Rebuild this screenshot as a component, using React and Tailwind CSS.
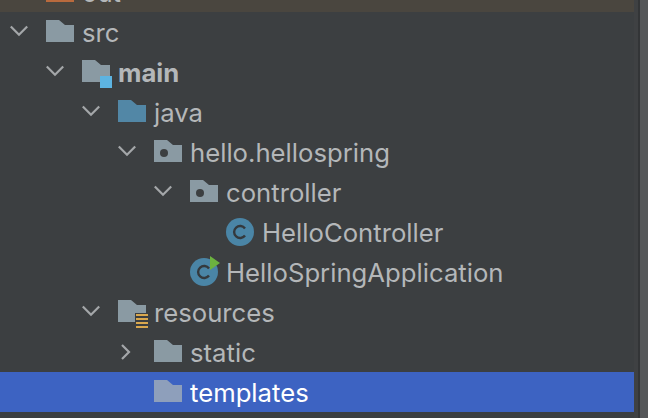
import React from 'react';

const FOLDER = 'M0 0H13L19 5H28V22H0Z';

const Chevron = ({ open }) => (
  <svg width="20" height="20" viewBox="0 0 20 20" fill="none" stroke="#a4a7a9" strokeWidth="2.2">
    {open ? <path d="M1.8 4.5L10 12.7L18.2 4.5" /> : <path d="M5 3L12 10L5 17" />}
  </svg>
);

const Folder = ({ kind }) => {
  const fill = kind === 'java' ? '#5287a6' : kind === 'selected' ? '#8e9fbb' : kind === 'out' ? '#b96a3d' : '#8a9aa3';
  return (
    <svg width="34" height="28" viewBox="0 0 34 28" className="overflow-visible">
      <path d={FOLDER} transform="translate(0 2)" fill={fill} />
      {kind === 'package' && <circle cx="10" cy="15" r="4" fill="#3c3f41" />}
      {kind === 'source' && <rect x="18" y="18" width="12" height="12" fill="#5db4e2" />}
      {kind === 'resource' && (
        <g>
          <rect x="17" y="15" width="14" height="15" fill="#3c3f41" />
          <path d="M18 17H30M18 21H30M18 25H30M18 29H30" stroke="#d9a84e" strokeWidth="2" />
        </g>
      )}
    </svg>
  );
};

const ClassIcon = ({ run }) => (
  <svg width="34" height="28" viewBox="0 0 34 28" className="overflow-visible">
    <circle cx="14" cy="14" r="14" fill="#4a85a6" />
    <path d="M19 10.5A6 6 0 1 0 19 17.5" fill="none" stroke="#34393d" strokeWidth="2.4" />
    {run && <path d="M20 -2L30 5L20 12Z" fill="#6cb33f" />}
  </svg>
);

const rows = [
  { label: 'src', pad: 'pl-[9px]', open: true, icon: <Folder kind="plain" /> },
  { label: 'main', pad: 'pl-[45px]', open: true, bold: true, icon: <Folder kind="source" /> },
  { label: 'java', pad: 'pl-[81px]', open: true, icon: <Folder kind="java" /> },
  { label: 'hello.hellospring', pad: 'pl-[117px]', open: true, icon: <Folder kind="package" /> },
  { label: 'controller', pad: 'pl-[153px]', open: true, icon: <Folder kind="package" /> },
  { label: 'HelloController', pad: 'pl-[189px]', icon: <ClassIcon /> },
  { label: 'HelloSpringApplication', pad: 'pl-[153px]', icon: <ClassIcon run /> },
  { label: 'resources', pad: 'pl-[81px]', open: true, icon: <Folder kind="resource" /> },
  { label: 'static', pad: 'pl-[117px]', open: false, icon: <Folder kind="plain" /> },
  { label: 'templates', pad: 'pl-[117px]', selected: true, icon: <Folder kind="selected" /> },
];

const Row = ({ row }) => (
  <div className={`flex h-10 items-center ${row.pad} ${row.selected ? 'bg-[#3d63c2] text-white' : 'text-[#b4b7b9]'}`}>
    <span className="flex w-[37px] shrink-0 items-center">
      {row.open !== undefined && <Chevron open={row.open} />}
    </span>
    <span className="w-[36px] shrink-0">{row.icon}</span>
    <span className={row.bold ? 'pt-0.5 font-bold' : 'pt-0.5'}>{row.label}</span>
  </div>
);

export default function App() {
  return (
    <div className="flex h-[418px] w-[648px] overflow-hidden bg-[#3c3f41] font-['Inter',sans-serif] text-[25.7px]">
      <div className="w-[634px] shrink-0">
        <div className="-mt-[28px] flex h-10 items-center bg-[#4a463f] pl-[9px] text-[#b4b7b9]">
          <span className="w-[37px] shrink-0" />
          <span className="w-[36px] shrink-0"><Folder kind="out" /></span>
          <span className="pt-0.5">out</span>
        </div>
        {rows.map((row) => (
          <Row key={row.label} row={row} />
        ))}
      </div>
      <div className="w-1 shrink-0 bg-[#3f4143]" />
      <div className="w-0.5 shrink-0 bg-[#333537]" />
      <div className="flex-1 bg-[#555759]" />
    </div>
  );
}
